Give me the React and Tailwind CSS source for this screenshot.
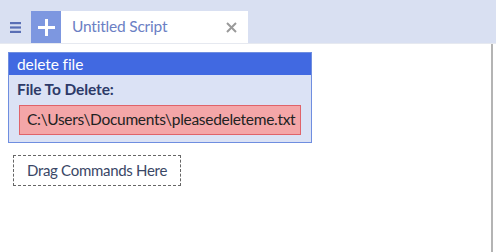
export default function App() {
  const font = { fontFamily: 'Lato, "Noto Sans", sans-serif' };
  return (
    <div className="w-[496px] h-[252px] bg-white flex flex-col overflow-hidden" style={font}>
      <div className="h-[44px] bg-[#d9e0f2] flex items-end border-b border-[#e6e9f0] shrink-0">
        <div className="w-[31px] h-[32px] flex items-center justify-center">
          <svg width="11" height="11" viewBox="0 0 11 11">
            <rect x="0" y="0" width="11" height="2.2" fill="#5a6fb5" />
            <rect x="0" y="4.4" width="11" height="2.2" fill="#5a6fb5" />
            <rect x="0" y="8.8" width="11" height="2.2" fill="#5a6fb5" />
          </svg>
        </div>
        <div className="w-[30px] h-[32px] bg-[#7d97e0] flex items-center justify-center">
          <svg width="17" height="17" viewBox="0 0 17 17">
            <rect x="7" y="0" width="3" height="17" fill="#fff" />
            <rect x="0" y="7" width="17" height="3" fill="#fff" />
          </svg>
        </div>
        <div className="w-[187px] h-[32px] bg-white flex items-center pl-[11px] pr-[10px]">
          <span className="text-[15.5px] tracking-[-0.2px] text-[#6b80c4] flex-1 leading-none">Untitled Script</span>
          <svg width="11" height="11" viewBox="0 0 11 11" className="mr-[1px]">
            <path d="M1 1 L10 10 M10 1 L1 10" stroke="#9a9a9a" strokeWidth="2" />
          </svg>
        </div>
      </div>
      <div className="flex-1 flex">
        <div className="flex-1 flex flex-col items-start pl-[8px] pt-[8px]">
          <div className="w-[304px] border border-[#6f8ee0] bg-[#dbe2f5]">
            <div className="h-[22px] bg-[#4169e1] text-white text-[15.5px] tracking-[-0.1px] leading-[22px] pl-[8px]">delete file</div>
            <div className="pl-[10px] pr-[10px] pt-[3px] pb-[7px]">
              <div className="text-[15.5px] font-bold tracking-[-0.1px] text-[#2d3a68] leading-[22px] ml-[-2px]">File To Delete:</div>
              <div className="mt-[5px] h-[30px] bg-[#f4a6a8] border border-[#e0636a] flex items-center pl-[7px] text-[15.5px] tracking-[-0.3px] text-[#222] whitespace-nowrap">
                C:\Users\Documents\pleasedeleteme.txt
              </div>
            </div>
          </div>
          <div className="mt-[12px] ml-[5px] w-[168px] h-[31px] border border-dashed border-[#666] flex items-center justify-center text-[15px] tracking-[-0.3px] text-[#3a4766]">
            Drag Commands Here
          </div>
        </div>
        <div className="w-[2px] bg-[#b4b4b4] mr-[3px]" />
      </div>
    </div>
  );
}
